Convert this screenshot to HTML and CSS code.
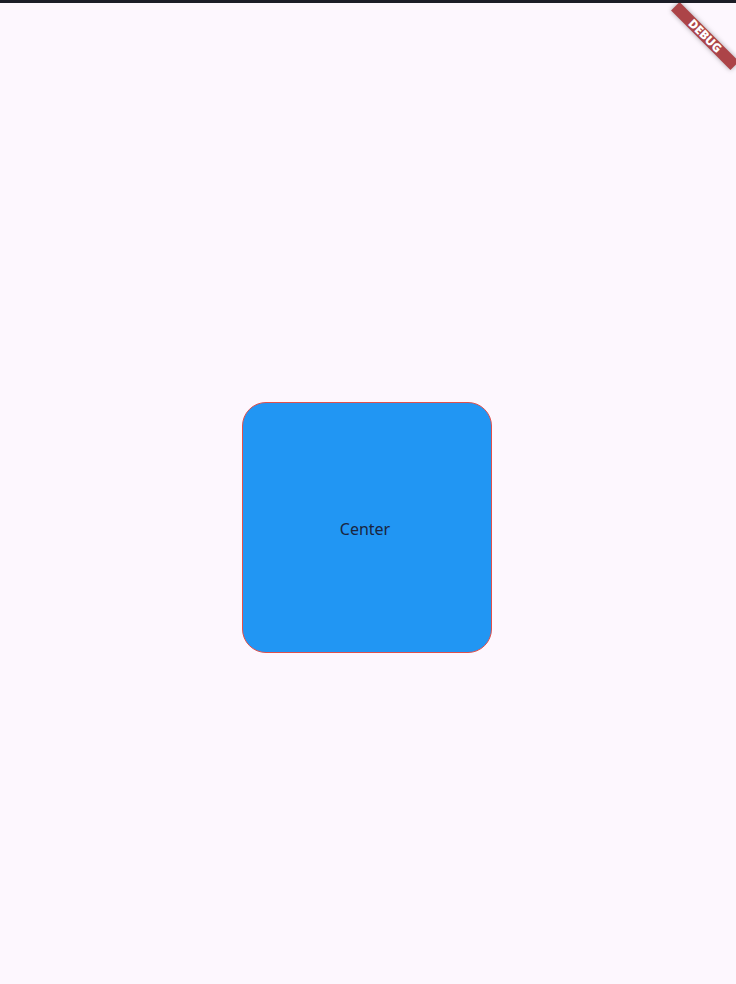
FILE: index.html
```html
<!DOCTYPE html>
<html>
<head>
<meta charset="utf-8">
<link rel="stylesheet" href="styles.css">
</head>
<body>
<div class="topbar"></div>
<main class="stage">
  <div class="box"><span class="label">Center</span></div>
</main>
<div class="banner"><span>DEBUG</span></div>
</body>
</html>
```
FILE: styles.css
```css
html, body {
  margin: 0;
  padding: 0;
  width: 736px;
  height: 984px;
  overflow: hidden;
  background: #fdf7fe;
  font-family: "Noto Sans", "Open Sans", sans-serif;
}
.topbar {
  position: relative;
  z-index: 2;
  height: 3px;
  background: #1c1d27;
}
.stage {
  display: flex;
  flex-direction: column;
  padding-top: 399px;
  padding-left: 242px;
}
.box {
  box-sizing: border-box;
  width: 250px;
  height: 251px;
  background: #2196f3;
  border: 1px solid #e0504c;
  border-radius: 24px;
  display: flex;
  align-items: center;
  justify-content: center;
}
.label {
  font-size: 16px;
  color: #1a2540;
  margin-top: 2px;
  margin-left: -4px;
}
.banner {
  position: absolute;
  z-index: 1;
  left: 663px;
  top: 30px;
  width: 84px;
  height: 12px;
  background: rgb(172, 68, 72);
  box-shadow: 0 0 5px rgba(0, 0, 0, 0.35);
  transform: rotate(45deg);
  display: flex;
  align-items: center;
  justify-content: center;
}
.banner span {
  color: #fff;
  font-family: "Noto Sans", sans-serif;
  font-weight: 900;
  font-size: 12px;
  line-height: 12px;
  margin-top: -1px;
}
```
